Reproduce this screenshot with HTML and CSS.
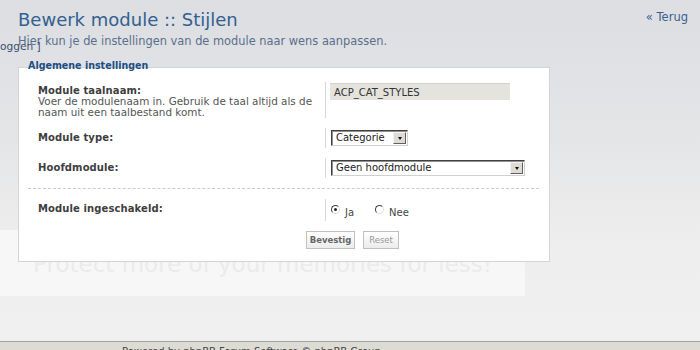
FILE: index.html
```html
<!DOCTYPE html>
<html lang="nl">
<head>
<meta charset="utf-8">
<title>Bewerk module :: Stijlen</title>
<link rel="stylesheet" href="styles.css">
</head>
<body>
<div class="page">
  <div class="main">
    <div class="head">
      <h1 class="title">Bewerk module :: Stijlen</h1>
      <a class="back" href="#">« Terug</a>
    </div>
    <p class="sub">Hier kun je de instellingen van de module naar wens aanpassen.</p>
    <div class="legend">Algemene instellingen</div>
    <div class="box">
      <div class="row">
        <div class="dt dt-multi">
          <span class="lbl">Module taalnaam:</span><br>
          <span class="desc">Voer de modulenaam in. Gebruik de taal altijd als de naam uit een taalbestand komt.</span>
        </div>
        <div class="dd dd-input"><span class="textin">ACP_CAT_STYLES</span></div>
      </div>
      <div class="row row-s">
        <div class="dt"><span class="lbl">Module type:</span></div>
        <div class="dd"><span class="sel sel-short"><span class="seltext">Categorie</span><span class="arrow"></span></span></div>
      </div>
      <div class="row row-s">
        <div class="dt"><span class="lbl">Hoofdmodule:</span></div>
        <div class="dd"><span class="sel sel-long"><span class="seltext">Geen hoofdmodule</span><span class="arrow"></span></span></div>
      </div>
      <div class="sep"></div>
      <div class="row row-s">
        <div class="dt"><span class="lbl">Module ingeschakeld:</span></div>
        <div class="dd radios">
          <span class="opt"><span class="radio on"></span><span class="rtext">Ja</span></span>
          <span class="opt"><span class="radio"></span><span class="rtext">Nee</span></span>
        </div>
      </div>
      <div class="actions">
        <span class="btn btn-main">Bevestig</span>
        <span class="btn btn-reset">Reset</span>
      </div>
    </div>
  </div>
  <div class="footer">Powered by phpBB Forum Software © phpBB Group</div>
</div>
<div class="stray">oggen ]</div>
<div class="watermark"><span class="wmtext">Protect more of your memories for less!</span></div>
</body>
</html>
```
FILE: styles.css
```css
html, body {
  margin: 0;
  padding: 0;
}
body {
  width: 700px;
  height: 350px;
  overflow: hidden;
  position: relative;
  font-family: "DejaVu Sans", Verdana, sans-serif;
  background: linear-gradient(to bottom, #dcdee2 0px, #e3e4e6 120px, #eeeeee 250px, #f0f0f0 350px);
}
.page {
  height: 350px;
  display: flex;
  flex-direction: column;
}
.main {
  padding: 0 12px 0 18px;
  position: relative;
  z-index: 1;
}
.head {
  display: flex;
  justify-content: space-between;
  align-items: flex-start;
}
.title {
  margin: 0;
  padding-top: 9px;
  font-size: 18px;
  line-height: 22px;
  font-weight: normal;
  color: #33608f;
}
.back {
  margin-top: 10px;
  font-size: 11.5px;
  line-height: 14px;
  color: #3a6290;
  text-decoration: none;
}
.sub {
  margin: 4px 0 0 0;
  font-size: 11.4px;
  line-height: 13px;
  color: #5b6f8c;
}
.legend {
  margin: 11px 0 0 10px;
  font-family: "DejaVu Sans Condensed", "DejaVu Sans", sans-serif;
  font-weight: bold;
  font-size: 10.6px;
  line-height: 12px;
  color: #1d4f85;
  height: 8px;
}
.box {
  width: 509px;
  background: #ffffff;
  border: 1px solid #d2d4d6;
  padding: 14px 11px 12px 10px;
  display: flex;
  flex-direction: column;
  gap: 10px;
}
.row {
  display: flex;
  align-items: stretch;
}
.dt {
  width: 287px;
  padding-left: 9px;
  font-size: 10px;
  line-height: 20px;
  color: #444;
}
.dt-multi {
  line-height: 11px;
  padding-top: 3px;
}
.lbl {
  font-weight: bold;
  color: #3e3e3e;
  letter-spacing: 0.1px;
}
.desc {
  color: #555;
  font-size: 10.4px;
}
.dd {
  border-left: 1px solid #d8d8d8;
  padding-left: 5px;
  display: flex;
  align-items: center;
  min-height: 20px;
}
.dd-input {
  align-items: flex-start;
  padding-left: 4px;
  padding-top: 1px;
}
.textin {
  display: block;
  width: 180px;
  height: 17px;
  padding-left: 4px;
  background: #e5e3dd;
  border-top: 1px solid #d4d2cc;
  font-size: 10px;
  line-height: 17px;
  color: #333;
  box-sizing: border-box;
}
.sel {
  display: flex;
  align-items: center;
  height: 16px;
  box-sizing: border-box;
  border: 1px solid;
  border-color: #404040 #d0d0d0 #d0d0d0 #404040;
  background: #fff;
  box-shadow: inset 1px 1px 0 #909090;
  padding: 0 1px 0 4px;
  font-size: 10px;
  color: #222;
}
.sel-short { width: 77px; }
.sel-long { width: 194px; }
.seltext {
  flex: 1;
  line-height: 14px;
}
.arrow {
  width: 13px;
  height: 12px;
  box-sizing: border-box;
  background: #dedbd4;
  border: 1px solid;
  border-color: #f4f4f4 #606060 #606060 #f4f4f4;
  display: flex;
  align-items: center;
  justify-content: center;
}
.arrow::after {
  content: "";
  border-left: 2.5px solid transparent;
  border-right: 2.5px solid transparent;
  border-top: 3px solid #111;
}
.sep {
  margin: 0 -1px;
  border-top: 1px dashed #c8ccd0;
  height: 0;
}
.radios {
  padding-top: 2px;
}
.opt {
  display: flex;
  align-items: center;
  margin-right: 21px;
}
.radio {
  width: 9px;
  height: 9px;
  box-sizing: border-box;
  border-radius: 50%;
  border: 1px solid;
  border-color: #404040 #e0e0e0 #e0e0e0 #404040;
  background: #fff;
  position: relative;
  margin-top: -3px;
}
.radio.on::after {
  content: "";
  position: absolute;
  left: 2px;
  top: 2px;
  width: 3px;
  height: 3px;
  border-radius: 50%;
  background: #222;
}
.rtext {
  margin-left: 5px;
  font-size: 10px;
  color: #444;
  padding-top: 3px;
}
.actions {
  display: flex;
  gap: 8px;
  padding-left: 277px;
}
.btn {
  height: 18px;
  box-sizing: border-box;
  border: 1px solid #c0c0c0;
  background: linear-gradient(to bottom, #ffffff, #ececec);
  font-size: 8.5px;
  line-height: 16px;
  padding: 0;
  text-align: center;
}
.btn-main {
  width: 49px;
  font-weight: bold;
  color: #666;
}
.btn-reset {
  width: 36px;
  color: #999;
}
.footer {
  margin-top: auto;
  height: 4px;
  border-top: 1px solid #a2a2a2;
  background: #dcdcd4;
  padding: 4px 0 0 122px;
  font-size: 10px;
  line-height: 12px;
  color: #444;
  overflow: hidden;
}
.stray {
  position: absolute;
  left: 0;
  top: 40px;
  font-size: 10.6px;
  line-height: 13px;
  color: #3a4f73;
  z-index: 2;
}
.watermark {
  position: absolute;
  left: 0;
  top: 230px;
  width: 525px;
  height: 66px;
  background: #f7f7f7;
  z-index: 0;
}
.wmtext {
  display: block;
  padding: 20px 0 0 33px;
  font-size: 23px;
  line-height: 28px;
  color: #ebebeb;
  white-space: nowrap;
}
```
